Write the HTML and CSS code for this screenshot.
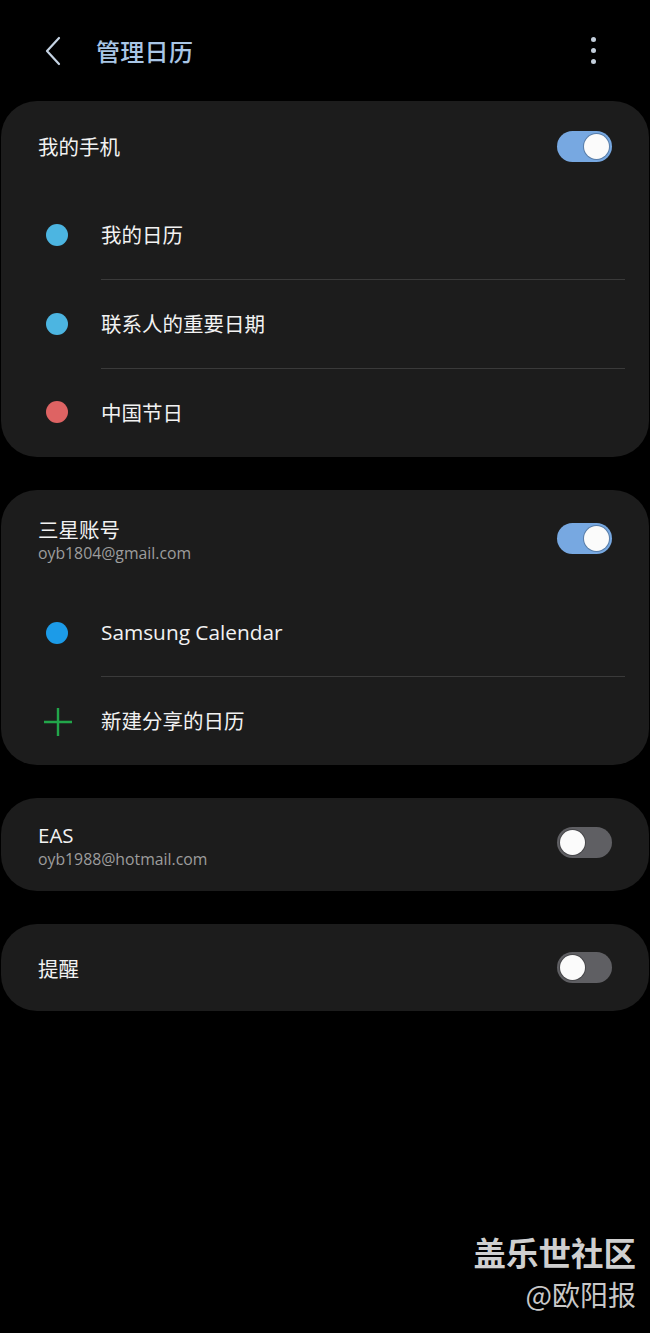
FILE: index.html
```html
<!DOCTYPE html>
<html lang="zh-CN">
<head>
<meta charset="utf-8">
<title>管理日历</title>
<link rel="stylesheet" href="styles.css">
</head>
<body>
<div class="page">
  <header class="topbar">
    <svg class="back" width="18" height="30" viewBox="0 0 18 30"><path d="M15 2 L3 15 L15 28" fill="none" stroke="#c5d3e3" stroke-width="2.2" stroke-linecap="round" stroke-linejoin="round"/></svg>
    <h1 class="title">管理日历</h1>
    <div class="more"><span></span><span></span><span></span></div>
  </header>

  <section class="card">
    <div class="head head-1">
      <div class="head-text"><div class="name">我的手机</div></div>
      <div class="toggle on"><span class="thumb"></span></div>
    </div>
    <div class="item h89"><span class="dot dot-cyan"></span><div class="label line">我的日历</div></div>
    <div class="item h89"><span class="dot dot-cyan"></span><div class="label line">联系人的重要日期</div></div>
    <div class="item h88"><span class="dot dot-red"></span><div class="label">中国节日</div></div>
  </section>

  <section class="card">
    <div class="head head-2">
      <div class="head-text"><div class="name">三星账号</div><div class="sub">oyb1804@gmail.com</div></div>
      <div class="toggle on"><span class="thumb"></span></div>
    </div>
    <div class="item h87"><span class="dot dot-blue"></span><div class="label line latin">Samsung Calendar</div></div>
    <div class="item h88">
      <svg class="plus" width="32" height="32" viewBox="0 0 32 32"><path d="M16 2 V30 M2 16 H30" stroke="#22a64a" stroke-width="2.4" fill="none"/></svg>
      <div class="label">新建分享的日历</div>
    </div>
  </section>

  <section class="card">
    <div class="head head-3">
      <div class="head-text"><div class="name latin">EAS</div><div class="sub">oyb1988@hotmail.com</div></div>
      <div class="toggle"><span class="thumb"></span></div>
    </div>
  </section>

  <section class="card">
    <div class="head head-4">
      <div class="head-text"><div class="name">提醒</div></div>
      <div class="toggle"><span class="thumb"></span></div>
    </div>
  </section>

  <div class="watermark">
    <div class="wm-1">盖乐世社区</div>
    <div class="wm-2">@欧阳报</div>
  </div>
</div>
</body>
</html>
```

FILE: styles.css
```css
* { box-sizing: border-box; }
html, body {
  margin: 0;
  padding: 0;
  background: #000;
}
body {
  font-family: "Open Sans", "Noto Sans CJK SC", sans-serif;
  color: #f2f2f2;
}
.page {
  position: relative;
  width: 650px;
  height: 1333px;
  overflow: hidden;
}
.topbar {
  height: 101px;
  display: flex;
  align-items: center;
  padding: 0 0 0 44px;
}
.back {
  display: block;
  margin-top: 1px;
}
.title {
  margin: 0 0 0 34px;
  font-family: "Noto Sans CJK SC", sans-serif;
  font-weight: 500;
  font-size: 24px;
  color: #a9c6e6;
  letter-spacing: 0.3px;
  flex: 1;
}
.more {
  display: flex;
  flex-direction: column;
  gap: 6px;
  margin-right: 54px;
}
.more span {
  width: 5px;
  height: 5px;
  border-radius: 50%;
  background: #c2cedb;
}
.card {
  margin: 0 1px 33px;
  background: #1c1c1c;
  border-radius: 36px;
}
.head {
  display: flex;
  align-items: center;
  justify-content: space-between;
  padding: 0 37px;
}
.head-1 { height: 90px; }
.head-2 { height: 100px; }
.head-3 { height: 93px; }
.head-4 { height: 87px; }
.head-text { display: flex; flex-direction: column; }
.name {
  font-family: "Noto Sans CJK SC", sans-serif;
  font-size: 20.5px;
  line-height: 26px;
  color: #f2f2f2;
}
.name.latin, .latin {
  font-family: "Open Sans", "Noto Sans CJK SC", sans-serif;
}
.sub {
  font-size: 15.8px;
  line-height: 22px;
  color: #9d9d9d;
  margin-top: 0;
}
.head-2 .head-text { margin-top: 0; }
.head-3 .head-text { margin-top: 3px; }
.toggle {
  width: 55px;
  height: 31px;
  border-radius: 16px;
  background: #5f5f63;
  display: flex;
  align-items: center;
  padding: 0 3px;
}
.toggle.on {
  background: #77a8e1;
  justify-content: flex-end;
}
.thumb {
  width: 25px;
  height: 25px;
  border-radius: 50%;
  background: #fbfbfb;
  box-shadow: 0 0 0 1px rgba(0,0,0,0.25);
}
.head-2 .toggle, .head-3 .toggle { margin-top: -4px; }
.item {
  display: flex;
  align-items: stretch;
  padding-left: 45px;
  padding-right: 24px;
}
.h87 { height: 87px; }
.h88 { height: 88px; }
.h89 { height: 89px; }
.dot {
  width: 22px;
  height: 22px;
  border-radius: 50%;
  align-self: center;
  margin-right: 33px;
  margin-top: -2px;
}
.dot-cyan { background: #4cb5e1; }
.dot-red { background: #de6363; }
.dot-blue { background: #1c9be8; }
.plus {
  align-self: center;
  margin-right: 27px;
  margin-left: -4px;
  margin-top: 2px;
}
.label {
  flex: 1;
  display: flex;
  align-items: center;
  font-family: "Noto Sans CJK SC", sans-serif;
  font-size: 20.5px;
  color: #f2f2f2;
  padding-bottom: 2px;
}
.label.latin {
  font-family: "Open Sans", "Noto Sans CJK SC", sans-serif;
  font-size: 20.8px;
}
.label.line {
  border-bottom: 1px solid #3a3a3a;
}
.watermark {
  position: absolute;
  right: 14px;
  top: 1230px;
  text-align: right;
  font-family: "Noto Sans CJK SC", sans-serif;
  color: #cfcfcf;
}
.wm-1 {
  font-size: 32.5px;
  font-weight: 700;
  line-height: 44px;
}
.wm-2 {
  font-size: 28px;
  line-height: 40px;
  color: #c8c8c8;
}
```
